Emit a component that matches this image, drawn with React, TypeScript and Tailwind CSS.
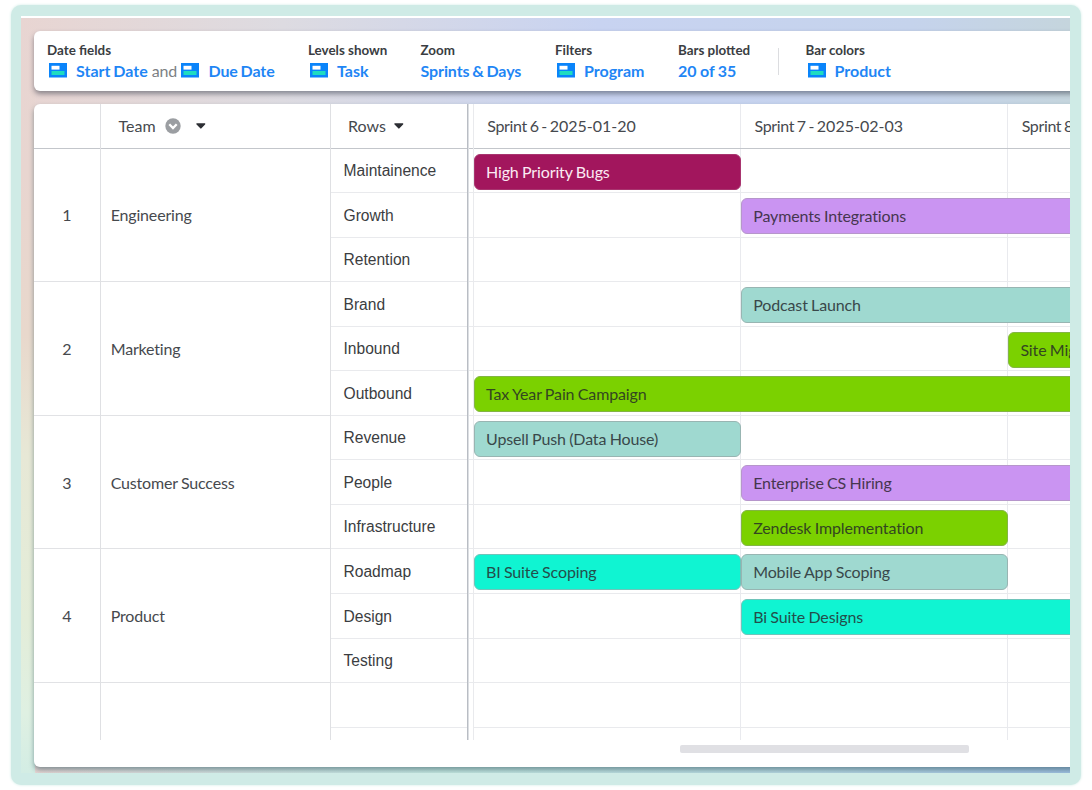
import React from "react";

type Bar = { col: number; span: number; label: string; tone: string };
type Row = { label: string; bars: Bar[] };
type Team = { name: string; rows: Row[] };

const berry = "bg-[#a2165d] border-[#a8356f] text-[#fbeaf3]";
const violet = "bg-[#ca94f2] border-[#b696cb] text-[#46364f]";
const sage = "bg-[#9fd9d0] border-[#98b5b2] text-[#39484a]";
const green = "bg-[#7bd100] border-[#83b544] text-[#334620]";
const aqua = "bg-[#10f4d2] border-[#6fc4ba] text-[#234e4b]";

const teams: Team[] = [
  {
    name: "Engineering",
    rows: [
      { label: "Maintainence", bars: [{ col: 0, span: 1, label: "High Priority Bugs", tone: berry }] },
      { label: "Growth", bars: [{ col: 1, span: 2, label: "Payments Integrations", tone: violet }] },
      { label: "Retention", bars: [] },
    ],
  },
  {
    name: "Marketing",
    rows: [
      { label: "Brand", bars: [{ col: 1, span: 2, label: "Podcast Launch", tone: sage }] },
      { label: "Inbound", bars: [{ col: 2, span: 1, label: "Site Migration", tone: green }] },
      { label: "Outbound", bars: [{ col: 0, span: 3, label: "Tax Year Pain Campaign", tone: green }] },
    ],
  },
  {
    name: "Customer Success",
    rows: [
      { label: "Revenue", bars: [{ col: 0, span: 1, label: "Upsell Push (Data House)", tone: sage }] },
      { label: "People", bars: [{ col: 1, span: 2, label: "Enterprise CS Hiring", tone: violet }] },
      { label: "Infrastructure", bars: [{ col: 1, span: 1, label: "Zendesk Implementation", tone: green }] },
    ],
  },
  {
    name: "Product",
    rows: [
      {
        label: "Roadmap",
        bars: [
          { col: 0, span: 1, label: "BI Suite Scoping", tone: aqua },
          { col: 1, span: 1, label: "Mobile App Scoping", tone: sage },
        ],
      },
      { label: "Design", bars: [{ col: 1, span: 2, label: "Bi Suite Designs", tone: aqua }] },
      { label: "Testing", bars: [] },
    ],
  },
];

const sprints = [
  { name: "Sprint 6 - ", start: "2025-01-20" },
  { name: "Sprint 7 - ", start: "2025-02-03" },
  { name: "Sprint 8 - ", start: "2025-02-17" },
];

const starts = ["col-start-1", "col-start-2", "col-start-3"];
const spans = ["", "col-span-1", "col-span-2", "col-span-3"];

function FieldIcon() {
  return (
    <svg width="18" height="15" viewBox="0 0 18 15" className="mr-[9px] ml-[2px] shrink-0">
      <rect width="18" height="14.5" fill="#0a84fa" />
      <rect x="2.5" y="2.8" width="8" height="3.8" fill="#fff" />
      <rect x="2.5" y="8" width="13" height="4" fill="#1fdcc0" />
    </svg>
  );
}

function Caret() {
  return (
    <svg width="10" height="6" viewBox="0 0 11 6">
      <path d="M1.2 0h8.2c.8 0 1.2.8.6 1.4L6 5.6c-.4.4-.9.4-1.3 0L.6 1.4C0 .8.4 0 1.2 0z" fill="#2c2e33" />
    </svg>
  );
}

function Group({ title, className, children }: { title: string; className: string; children: React.ReactNode }) {
  return (
    <div className={`flex shrink-0 flex-col whitespace-nowrap ${className}`}>
      <div className="text-[13.4px] leading-4 font-bold text-[#3a3d42]">{title}</div>
      <div className="mt-[1.5px] flex h-[22px] items-center text-base font-bold [word-spacing:-1px] text-[#1f86f5]">{children}</div>
    </div>
  );
}

function Lane({ row }: { row?: Row }) {
  return (
    <div className="grid h-[44.55px] grid-cols-[267.2px_267.2px_267.2px] border-b border-[#e9eaed] pt-[5px]">
      {row?.bars.map((b) => (
        <div
          key={b.label}
          className={`row-start-1 flex h-[36px] items-center rounded-[6px] border pl-[11px] tracking-[-0.13px] whitespace-nowrap [font-variant-ligatures:none] [word-spacing:-0.6px] ${starts[b.col]} ${spans[b.span]} ${b.tone}`}
        >
          {b.label}
        </div>
      ))}
    </div>
  );
}

export default function App() {
  return (
    <div className="h-[790px] w-[1092px] overflow-hidden bg-white pt-[5px] pl-[11px] font-['Lato',sans-serif] text-base text-[#46494e]">
      <div className="h-[780px] w-[1070px] rounded-[10px] bg-[#cfebe6] pt-[11px] pl-[10px] shadow-[0_0_3px_#cfebe6]">
        <div className="h-[757px] w-[1049px] overflow-hidden border-t-2 border-white bg-[linear-gradient(180deg,transparent_0%,#e8d5d0_20%,#e8d8cc_42%,#e7e8d6_58%,#e3edd9_80%,#dff0e2_92%,#d3ede4_100%),linear-gradient(90deg,transparent_0%,#c3e6df_40%,#b5d6e0_75%,#9fc0e0_100%),linear-gradient(90deg,#e8d5d2_0%,#dddbe1_25%,#c8d3f1_55%,#c5d3ec_85%,#c5d5dd_100%)] bg-[length:14px_100%,100%_20px,100%_100%] bg-[position:0_0,0_100%,0_0] bg-no-repeat pt-[13px] pl-[13px]">
          <header className="flex h-[60px] w-[1060px] rounded-[6px] bg-white pt-[11px] pl-[13px] shadow-[0_3px_5px_rgba(50,55,70,0.5)]">
            <Group title="Date fields" className="w-[261px]">
              <FieldIcon />
              <span>Start Date</span>
              <span className="mr-[2.5px] ml-[4px] font-normal tracking-[-0.2px] text-[#7c7f84]">and</span>
              <FieldIcon />
              <span className="tracking-[-0.1px]">Due Date</span>
            </Group>
            <Group title="Levels shown" className="w-[112.5px]">
              <FieldIcon /><span>Task</span>
            </Group>
            <Group title="Zoom" className="w-[134.5px]">
              <span className="tracking-[-0.1px]">Sprints &amp; Days</span>
            </Group>
            <Group title="Filters" className="w-[123px]">
              <FieldIcon /><span>Program</span>
            </Group>
            <Group title="Bars plotted" className="w-[100px]"><span className="[word-spacing:-0.5px]">20 of 35</span></Group>
            <div className="mt-[6px] h-[27px] w-px bg-[#dcdde0]" />
            <Group title="Bar colors" className="ml-[26.5px]">
              <FieldIcon /><span>Product</span>
            </Group>
          </header>

          <main className="mt-[13px] h-[663px] w-[1060px] rounded-[6px] bg-white shadow-[0_3px_5px_rgba(40,75,85,0.5)]">
            <div className="flex h-[636px] overflow-hidden">
              <div className="w-[67px] shrink-0 border-r border-[#dfe0e3]">
                <div className="h-[44.5px] border-b border-[#c3c6cb]" />
                {teams.map((t, i) => (
                  <div key={t.name} className="flex h-[133.65px] items-center justify-center border-b border-[#e1e2e5] pt-px">{i + 1}</div>
                ))}
              </div>
              <div className="w-[230px] shrink-0 border-r border-[#dfe0e3]">
                <div className="flex h-[44.5px] items-center border-b border-[#c3c6cb] pl-[17.5px]">
                  Team
                  <svg width="16" height="16" viewBox="0 0 16 16" className="mr-[15px] ml-[9px]">
                    <circle cx="8" cy="8" r="7.7" fill="#9b9ea2" />
                    <path d="M4.3 6.3 8 10l3.7-3.7" fill="none" stroke="#fff" strokeWidth="2.3" />
                  </svg>
                  <Caret />
                </div>
                {teams.map((t) => (
                  <div key={t.name} className="flex h-[133.65px] items-center border-b border-[#e1e2e5] pt-px pl-[9.7px] tracking-[-0.17px] [word-spacing:-0.6px]">{t.name}</div>
                ))}
              </div>
              <div className="w-[137px] shrink-0 border-r border-[#b9bdc4]">
                <div className="flex h-[44.5px] items-center gap-[8px] border-b border-[#c3c6cb] pl-[17px]">
                  Rows <Caret />
                </div>
                {teams.flatMap((t) => t.rows).map((r) => (
                  <div key={r.label} className="flex h-[44.55px] items-center border-b border-[#e9eaed] pt-px pl-[12.5px] font-['Liberation_Sans',sans-serif] text-[15.6px] text-[#3b3d41]">
                    {r.label}
                  </div>
                ))}
                <div className="h-[44.55px] border-b border-[#e9eaed]" />
              </div>
              <div className="w-[6px] shrink-0 border-r border-l border-r-[#e9eaed] border-l-[#dcdfe3]">
                <div className="h-[44.5px] border-b border-[#c3c6cb]" />
                {teams.flatMap((t) => t.rows).map((r) => (
                  <div key={r.label} className="h-[44.55px] border-b border-[#e9eaed]" />
                ))}
              </div>
              <div className="w-[802px] shrink-0 bg-[linear-gradient(90deg,transparent_266px,#e9eaee_266px,#e9eaee_267px,transparent_267px,transparent_533px,#e9eaee_533px,#e9eaee_534px,transparent_534px)]">
                <div className="grid h-[44.5px] grid-cols-[267.2px_267.2px_267.2px] items-center border-b border-[#c3c6cb] pl-[13.3px]">
                  {sprints.map((s) => (
                    <div key={s.start} className="whitespace-pre">
                      <span className="tracking-[-0.35px] [word-spacing:-1px]">{s.name}</span>
                      {s.start}
                    </div>
                  ))}
                </div>
                {teams.flatMap((t) => t.rows).map((r) => <Lane key={r.label} row={r} />)}
                <Lane />
              </div>
            </div>
            <div className="mt-[5px] ml-[646px] h-[8px] w-[289px] rounded-[2px] bg-[#e0e0e4]" />
          </main>
        </div>
      </div>
    </div>
  );
}
